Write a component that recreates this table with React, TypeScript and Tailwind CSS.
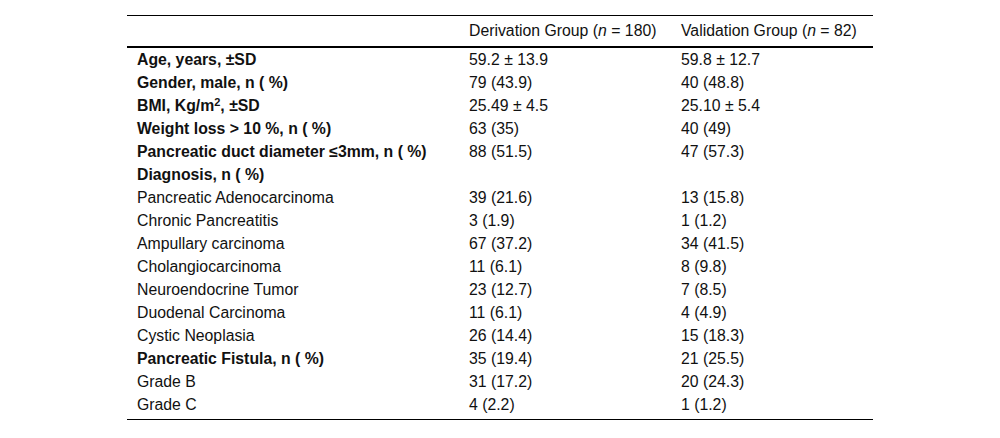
type Row = { label: React.ReactNode; a: string; b: string; bold?: boolean };

const ROWS: Row[] = [
  { label: "Age, years, ±SD", a: "59.2 ± 13.9", b: "59.8 ± 12.7", bold: true },
  { label: "Gender, male, n ( %)", a: "79 (43.9)", b: "40 (48.8)", bold: true },
  {
    label: (
      <>
        BMI, Kg/m<sup className="text-[11px]">2</sup>, ±SD
      </>
    ),
    a: "25.49 ± 4.5",
    b: "25.10 ± 5.4",
    bold: true,
  },
  { label: "Weight loss > 10 %, n ( %)", a: "63 (35)", b: "40 (49)", bold: true },
  { label: "Pancreatic duct diameter ≤3mm, n ( %)", a: "88 (51.5)", b: "47 (57.3)", bold: true },
  { label: "Diagnosis, n ( %)", a: "", b: "", bold: true },
  { label: "Pancreatic Adenocarcinoma", a: "39 (21.6)", b: "13 (15.8)" },
  { label: "Chronic Pancreatitis", a: "3 (1.9)", b: "1 (1.2)" },
  { label: "Ampullary carcinoma", a: "67 (37.2)", b: "34 (41.5)" },
  { label: "Cholangiocarcinoma", a: "11 (6.1)", b: "8 (9.8)" },
  { label: "Neuroendocrine Tumor", a: "23 (12.7)", b: "7 (8.5)" },
  { label: "Duodenal Carcinoma", a: "11 (6.1)", b: "4 (4.9)" },
  { label: "Cystic Neoplasia", a: "26 (14.4)", b: "15 (18.3)" },
  { label: "Pancreatic Fistula, n ( %)", a: "35 (19.4)", b: "21 (25.5)", bold: true },
  { label: "Grade B", a: "31 (17.2)", b: "20 (24.3)" },
  { label: "Grade C", a: "4 (2.2)", b: "1 (1.2)" },
];

export default function App() {
  return (
    <div
      className="min-h-[438px] bg-white pt-[15px] text-[15.8px] text-[#111]"
      style={{ fontFamily: '"Liberation Sans", Arial, sans-serif' }}
    >
      <div className="mx-auto w-[746px] border-y border-black pb-[3px]">
        <div className="grid h-[32px] grid-cols-[332px_212px_202px] items-center border-b-2 border-black">
          <div />
          <div className="px-[10px]">
            Derivation Group (<i>n</i> = 180)
          </div>
          <div className="px-[10px]">
            Validation Group (<i>n</i> = 82)
          </div>
        </div>
        {ROWS.map((r, i) => (
          <div
            key={i}
            className="grid h-[23px] grid-cols-[332px_212px_202px] items-center leading-[23px]"
          >
            <div className={r.bold ? "px-[10px] font-bold" : "px-[10px]"}>{r.label}</div>
            <div className="px-[10px]">{r.a}</div>
            <div className="px-[10px]">{r.b}</div>
          </div>
        ))}
      </div>
    </div>
  );
}
